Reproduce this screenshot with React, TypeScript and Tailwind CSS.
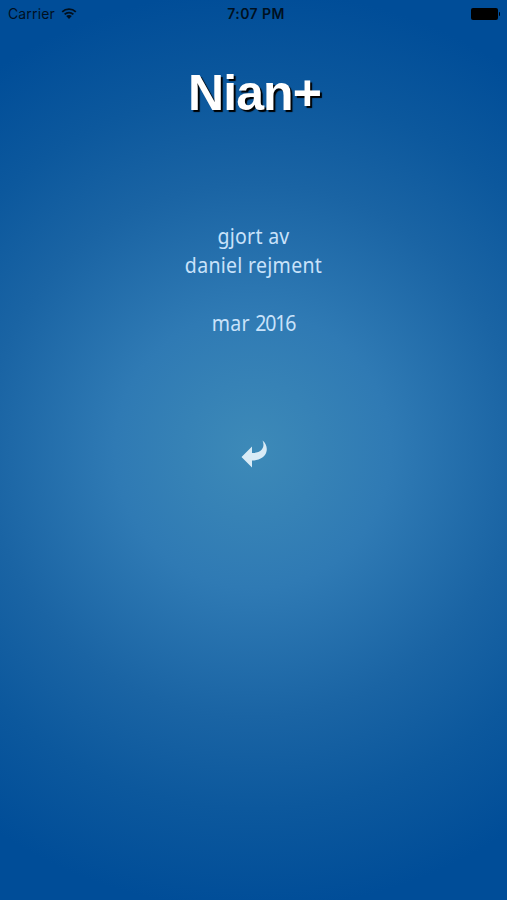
function WifiIcon() {
  return (
    <svg viewBox="0 0 16 12" className="ml-1.5 h-3 w-4" fill="none" stroke="#00101f">
      <path d="M1.2 3.8a9.8 9.8 0 0 1 13.6 0" strokeWidth="1.8" />
      <path d="M3.6 6.3a6.4 6.4 0 0 1 8.8 0" strokeWidth="1.8" />
      <path d="M8 10.9 5.2 8.1a3.9 3.9 0 0 1 5.6 0Z" fill="#00101f" stroke="none" />
    </svg>
  )
}

function StatusBar() {
  return (
    <div className="grid h-7 grid-cols-3 items-center pr-[7px] pl-2 font-['Inter','Liberation_Sans',sans-serif] text-sm text-[#00101f]">
      <div className="flex items-center">
        <span className="tracking-[0.01em]">Carrier</span>
        <WifiIcon />
      </div>
      <span className="pl-1 text-center font-semibold tracking-[0.03em]">7:07 PM</span>
      <div className="flex items-center justify-end gap-px">
        <span className="h-3 w-[27px] rounded-[2px] bg-black" />
        <span className="h-1 w-[1.5px] rounded-r bg-black" />
      </div>
    </div>
  )
}

function BackArrow() {
  return (
    <svg viewBox="0 0 26 30" className="h-[30px] w-[26px]" fill="#d9ebf6">
      <path d="M0.500 18 11 7.500V14C14.500 14 18.500 13.300 20.800 10.500C23 7.800 22.800 4.500 21.500 1.500C25 4 26.300 8.500 25.600 12C24.500 18 18.500 21.500 11 21.500V28.500Z" />
    </svg>
  )
}

export default function App() {
  return (
    <main className="flex h-[900px] w-[507px] flex-col overflow-hidden bg-[radial-gradient(circle_460px_at_253px_450px,#3d8ab8_0%,#2f7ab4_30%,#1a64a4_58%,#0c589d_78%,#004d98_100%)]">
      <StatusBar />
      <h1 className="mt-9 pl-0.5 text-center font-['Liberation_Sans',Arial,sans-serif] text-[50px] leading-[58px] font-bold tracking-[-0.9px] text-white [text-shadow:2px_2px_1px_#000]">
        Nian+
      </h1>
      <div className="mt-[100px] scale-x-[0.93] text-center font-['Noto_Sans',sans-serif] text-[21px] leading-[29px] tracking-[0.3px] text-[#c9e2fa]">
        <p>gjort av</p>
        <p>daniel rejment</p>
        <p className="mt-[29px]">
          mar <span className="tracking-[-1.2px]">2016</span>
        </p>
      </div>
      <button className="mt-[101px] flex justify-center" aria-label="Tillbaka">
        <BackArrow />
      </button>
    </main>
  )
}
